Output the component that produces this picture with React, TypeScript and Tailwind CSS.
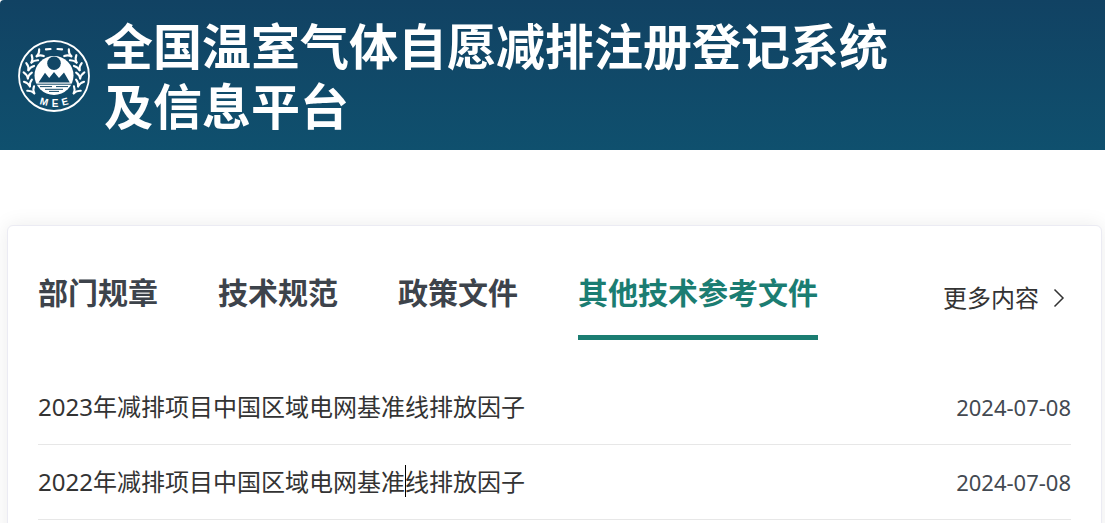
import { useState } from 'react';

const tabs = ['部门规章', '技术规范', '政策文件', '其他技术参考文件'];

const documents = [
  { before: '2023年减排项目中国区域电网基准线排放因子', after: '', date: '2024-07-08' },
  { before: '2022年减排项目中国区域电网基准', after: '线排放因子', date: '2024-07-08' },
];

// Leaf pairs of the laurel, in degrees from the top of the emblem
const leafAngles = [38, 56, 74, 92, 110, 128];

function Emblem() {
  return (
    <svg className="h-[72px] w-[72px] shrink-0" viewBox="0 0 72 72" fill="none" role="img" aria-label="MEE">
      <circle cx="36" cy="36" r="35" stroke="white" strokeWidth="1.8" />
      {[-1, 1].map((side) => (
        <g key={side} transform={side === -1 ? 'translate(72 0) scale(-1 1)' : undefined}>
          <path d="M39.5 9 L44 9.4" stroke="white" strokeWidth="2.2" strokeLinecap="round" />
          {leafAngles.map((angle) => (
            <g key={angle} transform={`rotate(${angle} 36 36)`} stroke="white" strokeLinecap="round">
              <path d="M37.5 9.8 C34.5 9.4 32.6 7.8 31.2 5.8" strokeWidth="2.1" />
              <path d="M37.5 9.8 C34.5 10.4 33 12 31.8 14" strokeWidth="2.1" />
            </g>
          ))}
        </g>
      ))}
      <circle cx="36" cy="35.5" r="19.5" fill="white" />
      <circle cx="36" cy="23.2" r="6.8" fill="#114766" />
      <path
        d="M20.5 42.4 L27 32.8 L31.2 38 L36 32 L41 38 L46 32.4 L51.8 42.4 Z"
        fill="#114766"
      />
      <path d="M18 44.2 H54 M22 46.6 H34 M38 46.6 H50 M27 49.3 H45 M31 51.4 H41" stroke="#114766" strokeWidth="1" />
      <g fill="white" className="font-['Liberation_Sans'] text-[10px] font-bold" textAnchor="middle">
        <text x="26" y="65" transform="rotate(14 26 62)">M</text>
        <text x="37" y="67">E</text>
        <text x="47" y="65" transform="rotate(-14 47 62)">E</text>
      </g>
    </svg>
  );
}

export default function App() {
  const [activeTab, setActiveTab] = useState(3);

  return (
    <div className="min-h-screen overflow-hidden bg-white font-['Noto_Sans','Noto_Sans_CJK_SC',sans-serif] text-[#333333]">
      {/* Header */}
      <header className="flex items-center gap-[14px] rounded-tl bg-linear-to-b from-[#114263] to-[#0f506e] px-[18px] pt-4 pb-[14px]">
        <Emblem />
        <h1 className="max-w-[800px] text-[49px] leading-[60px] font-bold text-white">
          全国温室气体自愿减排注册登记系统及信息平台
        </h1>
      </header>

      {/* Documents */}
      <main className="mt-[75px] mr-[3px] ml-[7px] rounded-md border border-[#ebebf3] bg-white px-[30px] pt-[29px] pb-8 shadow-[0_0_20px_rgba(0,0,0,0.08)]">
        <div className="flex items-start justify-between">
          <div role="tablist" className="flex gap-[60px]">
            {tabs.map((tab, index) => (
              <button
                key={tab}
                role="tab"
                aria-selected={activeTab === index}
                onClick={() => setActiveTab(index)}
                className={`h-[85px] border-b-[5px] pb-[5px] text-[30px] leading-[75px] font-bold whitespace-nowrap ${
                  activeTab === index
                    ? 'border-[#1b7d72] text-[#1b7d72]'
                    : 'border-transparent text-[#3d434b]'
                }`}
              >
                {tab}
              </button>
            ))}
          </div>
          <a href="#" className="mt-[23px] flex items-center gap-[14px] text-2xl leading-10">
            更多内容
            <svg className="mr-[6px] h-5 w-3" viewBox="0 0 12 20" fill="none" stroke="currentColor" strokeWidth="1.5">
              <path d="M1.5 1.5 L10 10 L1.5 18.5" />
            </svg>
          </a>
        </div>

        <ul className="mt-[30px]">
          {documents.map((doc) => (
            <li key={doc.before} className="flex h-[75px] items-center justify-between border-b border-[#e7e7e7]">
              <a href="#" className="text-2xl">
                {doc.before}
                {doc.after && (
                  <span className="relative">
                    <span className="absolute top-0 left-0 h-8 w-px bg-black" />
                    {doc.after}
                  </span>
                )}
              </a>
              <time className="text-[22px] text-[#434951]">{doc.date}</time>
            </li>
          ))}
        </ul>
      </main>
    </div>
  );
}
